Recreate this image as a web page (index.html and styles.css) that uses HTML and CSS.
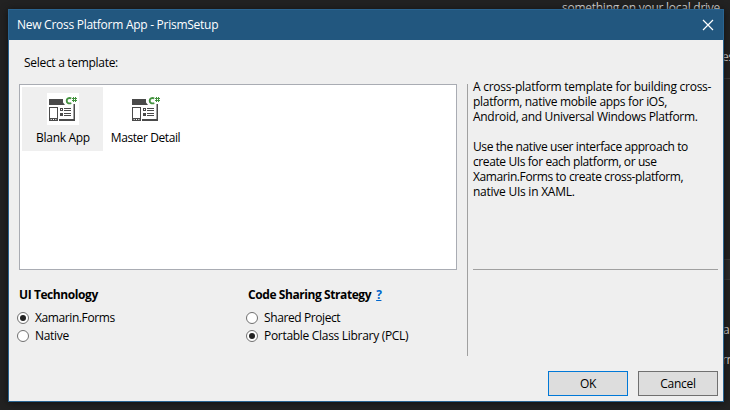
FILE: index.html
```html
<!DOCTYPE html>
<html lang="en">
<head>
<meta charset="utf-8">
<title>New Cross Platform App</title>
<link rel="stylesheet" href="styles.css">
</head>
<body>
<svg width="0" height="0" class="defs">
  <symbol id="template" viewBox="0 0 32 32">
    <path fill="#4a4a4a" d="M2 6h14v3.500l2 2.500H2z"/>
    <path fill="#4a4a4a" fill-rule="evenodd" d="M2 14h9v14H2zM3 15v10h7v-10z"/>
    <path fill="#fff" d="M3.700 26h1v1h-1zM6 26h1v1h-1zM8.300 26h1v1h-1z"/>
    <path fill="#4a4a4a" d="M12 26h14.500V11H28v17H12z"/>
    <path fill="#4a4a4a" fill-rule="evenodd" d="M13 15h3v3h-3zM14 16v1h1v-1z"/>
    <path fill="#4a4a4a" d="M13 20h3v3h-3zM17 15h7v1h-7zM17 17h7v1h-7zM17 20h7v1h-7zM17 22h7v1h-7z"/>
    <path fill="none" stroke="#43933f" stroke-width="1.900" d="M24.300 5.300C21.800 4.500 19.700 5.300 19.700 7.700S21.800 10.900 24.300 10.100"/>
    <path fill="none" stroke="#43933f" stroke-width="1" d="M26.500 4v5M28.500 4v5M25 5.500h5M25 7.500h5"/>
  </symbol>
</svg>
<div class="behind drive">something on your local drive</div>
<div class="behind right-a">es</div>
<div class="behind right-b">a</div>
<div class="behind right-c">rm</div>
<div class="rule"></div>
<div class="band"></div>
<main class="dialog">
  <header class="titlebar">
    <span class="title">New Cross Platform App - PrismSetup</span>
    <svg class="close" width="12" height="12" viewBox="0 0 12 12"><path d="M1 1l10 10M11 1L1 11" stroke="#fff" stroke-width="1.200"/></svg>
  </header>
  <div class="content">
    <section class="left">
      <div class="prompt"><span>Select a template:</span></div>
      <div class="list">
        <div class="item selected"><svg class="icon"><use href="#template"/></svg><span class="blank">Blank App</span></div>
        <div class="item"><svg class="icon"><use href="#template"/></svg><span class="tight">Master Detail</span></div>
      </div>
      <div class="options">
        <div class="group">
          <h2><span>UI Technology</span></h2>
          <div class="option"><i class="radio on"></i><span class="tight">Xamarin.Forms</span></div>
          <div class="option"><i class="radio"></i><span>Native</span></div>
        </div>
        <div class="group">
          <h2><span>Code Sharing Strategy</span><a>?</a></h2>
          <div class="option"><i class="radio"></i><span class="tight">Shared Project</span></div>
          <div class="option"><i class="radio on"></i><span>Portable Class Library (PCL)</span></div>
        </div>
      </div>
    </section>
    <aside class="details">
      <div class="description">
        <p><span class="loose">A cross-platform template for building cross-</span><span>platform, native mobile apps for iOS,</span><span>Android, and Universal Windows Platform.</span></p>
        <p><span class="tight">Use the native user interface approach to</span><span class="tight">create UIs for each platform, or use</span><span class="tight">Xamarin.Forms to create cross-platform,</span><span class="loose">native UIs in XAML.</span></p>
      </div>
    </aside>
  </div>
  <footer class="buttons"><div class="button primary">OK</div><div class="button">Cancel</div></footer>
</main>
</body>
</html>
```
FILE: styles.css
```css
* { box-sizing: border-box; }
body { margin: 0; width: 730px; height: 410px; overflow: hidden; position: relative; background: #222; color: #000; font: 12px/15px "Open Sans", "Noto Sans", sans-serif; letter-spacing: -0.3px; }
body::before { content: ""; display: table; }
.tight { letter-spacing: -0.4px; }
.loose { letter-spacing: -0.25px; }
.defs { position: absolute; }
.behind { position: absolute; color: #dcdcdc; white-space: nowrap; }
.drive { left: 562px; top: 0; letter-spacing: -0.26px; }
.right-a { left: 722px; top: 49px; }
.right-b { left: 723px; top: 322px; }
.right-c { left: 722px; top: 352px; }
.rule { position: absolute; left: 724px; top: 78px; width: 6px; height: 1px; background: #393939; }
.band { position: absolute; left: 724px; top: 259px; width: 6px; height: 21px; background: #2b2b2b; border: solid #393939; border-width: 1px 0; }
.dialog { position: relative; margin: 9px 0 0 8px; width: 716px; height: 393px; border: 1px solid #2a6490; background: #efefef; box-shadow: 0 1px 7px #101010; display: flex; flex-direction: column; white-space: nowrap; }
.titlebar { height: 30px; background: #22577f; color: #fff; display: flex; align-items: center; justify-content: space-between; padding: 0 9px 1px 8px; flex: none; }
.title { letter-spacing: -0.27px; }
.close { display: block; }
.content { display: flex; height: 316px; padding-left: 10px; }
.left { width: 438px; }
.prompt { height: 44px; padding: 15px 0 0 5px; }
.list { height: 186px; border: 1px solid #a9acb3; background: #fff; padding: 2px; display: flex; gap: 2px; }
.item { width: 81px; height: 64px; padding-top: 6px; display: flex; flex-direction: column; align-items: center; gap: 5px; }
.blank { padding-left: 1px; }
.selected { background: #efefef; }
.icon { width: 32px; height: 32px; background: #fff; flex: none; margin-left: 1px; }
.options { display: flex; padding-top: 17px; }
.group { width: 229px; flex: none; }
.group:last-child { width: 209px; }
h2 { margin: 0 0 7px; font-size: 12px; line-height: 15px; letter-spacing: -0.42px; display: flex; gap: 5px; }
h2 a { color: #0066cc; text-decoration: underline; }
.option { display: flex; align-items: center; height: 18px; margin-left: -2px; gap: 6px; }
.option span { padding-bottom: 1px; }
.radio { width: 12px; height: 12px; border: 1px solid #707070; border-radius: 50%; background: #fff; display: grid; place-items: center; }
.on::after { content: ""; width: 6px; height: 6px; background: #222; border-radius: 50%; }
.details { margin: 44px 0 0 10px; width: 251px; height: 272px; border-left: 1px solid #a0a0a0; padding-left: 5px; }
.description { display: flow-root; height: 186px; border-bottom: 1px solid #a0a0a0; }
p { margin: 0 0 15px; }
p:first-child { margin-top: -5px; }
p span { display: block; }
.buttons { display: flex; justify-content: flex-end; gap: 10px; margin: 15px 5px 0 0; }
.button { width: 80px; height: 25px; border: 1px solid #707070; background: #ddd; text-align: center; line-height: 23px; }
.primary { border-color: #0078d7; }
```
